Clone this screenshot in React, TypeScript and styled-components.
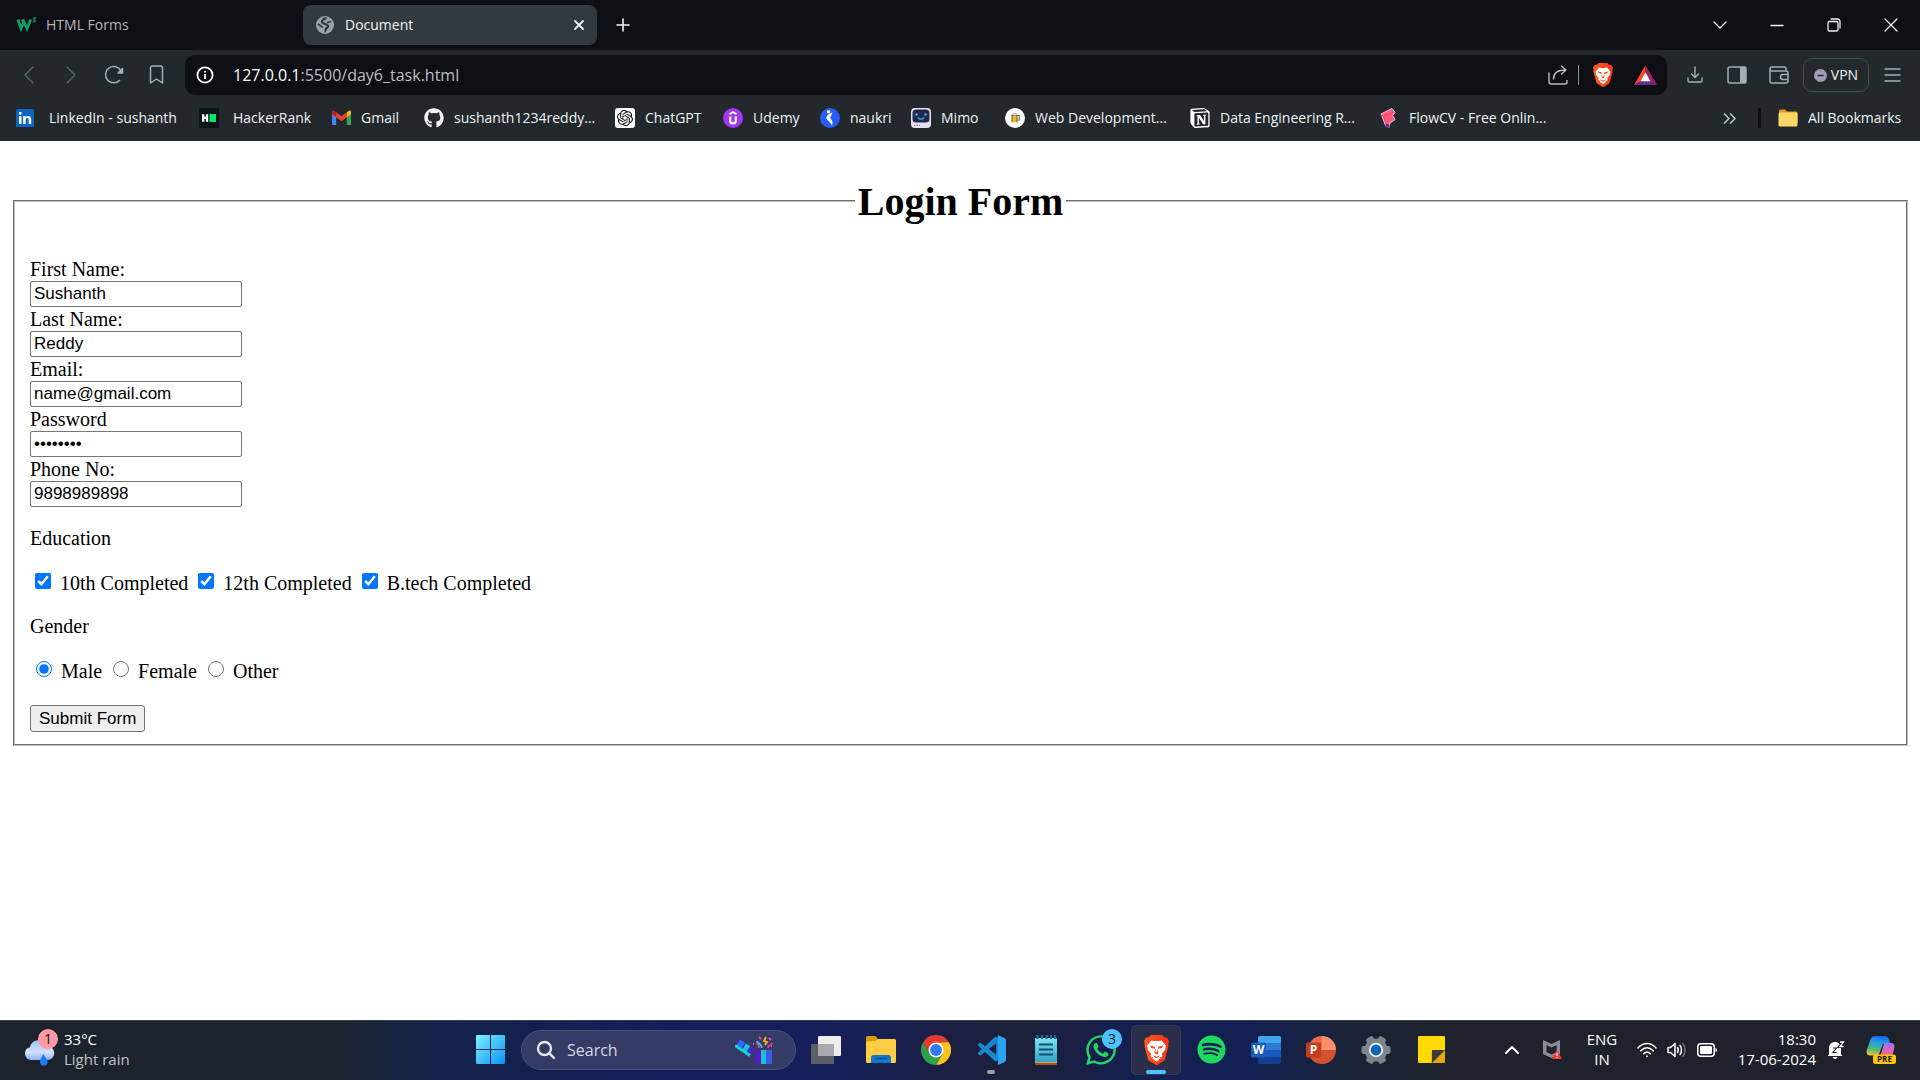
import React from "react";
import styled, { createGlobalStyle } from "styled-components";
import { SiOpenai, SiNotion } from "react-icons/si";
import { FaSpotify, FaWhatsapp, FaGithub } from "react-icons/fa";
import { VscVscode } from "react-icons/vsc";

const ui = `"Segoe UI", "Open Sans", "Noto Sans", sans-serif`;
const serif = `"Times New Roman", "Liberation Serif", serif`;
const sans = `Arial, "Liberation Sans", sans-serif`;

const Global = createGlobalStyle`
  *, *::before, *::after { box-sizing: border-box; }
  body { margin: 0; background: #fff; }
  svg { display: block; flex: none; }
`;

const Screen = styled.div`
  display: flex;
  flex-direction: column;
  min-height: 100vh;
`;

/* ---------- browser chrome ---------- */

const Chrome = styled.header`
  font: 14px/20px ${ui};
  color: #f1f2f3;
  background: #22282c;
`;

const TabStrip = styled.div`
  display: flex;
  align-items: center;
  height: 50px;
  padding-right: 1px;
  background: #0e0f14;
`;

const Tab = styled.button<{ $active?: boolean }>`
  display: flex;
  align-items: center;
  gap: ${(p) => (p.$active ? 11 : 9)}px;
  width: ${(p) => (p.$active ? 294 : 303)}px;
  height: 40px;
  padding: 0 12px 0 ${(p) => (p.$active ? 13 : 16)}px;
  border: 0;
  border-radius: 8px;
  background: ${(p) => (p.$active ? "#323a3f" : "transparent")};
  color: ${(p) => (p.$active ? "#f4f5f6" : "#b4b6ba")};
  font: 14px/20px ${ui};
  text-align: left;
`;

const TabTitle = styled.span`
  flex: 1;
`;

const PlainButton = styled.button<{ $w: number }>`
  display: flex;
  align-items: center;
  justify-content: center;
  width: ${(p) => p.$w}px;
  height: 40px;
  padding: 0;
  border: 0;
  background: transparent;
  color: inherit;
  flex: none;
`;

const Spacer = styled.div`
  flex: 1;
`;

const Toolbar = styled.div`
  display: flex;
  align-items: center;
  height: 50px;
  padding: 0 7px 0 8px;
  color: #a3adb3;
`;

const AddressBar = styled.div`
  display: flex;
  align-items: center;
  flex: 1;
  height: 40px;
  margin: 0 7px 0 8px;
  padding: 0 4px 0 10px;
  border-radius: 10px;
  background: #0e0f14;
`;

const Url = styled.a`
  flex: 1;
  margin-left: 18px;
  color: #bcbec2;
  font-size: 16px;
  line-height: 24px;
  text-decoration: none;
`;

const Host = styled.span`
  color: #fff;
`;

const Divider = styled.span<{ $dark?: boolean }>`
  width: ${(p) => (p.$dark ? 3 : 1)}px;
  height: 20px;
  background: ${(p) => (p.$dark ? "#0e0f14" : "#8a8d92")};
`;

const Vpn = styled.button`
  display: flex;
  align-items: center;
  justify-content: center;
  gap: 4px;
  width: 66px;
  height: 34px;
  margin: 0 2px 0 3px;
  padding: 0;
  border: 1px solid #444c51;
  border-radius: 9px;
  background: transparent;
  color: #f1f2f3;
  font: 14px/20px ${ui};
`;

const Bookmarks = styled.nav`
  display: flex;
  align-items: center;
  height: 41px;
  padding: 0 16px 5px 15px;
`;

const Bookmark = styled.a<{ $w?: number; $gap?: number }>`
  display: flex;
  align-items: center;
  gap: ${(p) => p.$gap ?? 10}px;
  width: ${(p) => (p.$w ? `${p.$w}px` : "auto")};
  color: inherit;
  font-size: 14px;
  text-decoration: none;
  white-space: nowrap;
`;

const IconSlot = styled.span<{ $w?: number; $bg?: string; $r?: number }>`
  display: flex;
  align-items: center;
  justify-content: center;
  flex: none;
  width: ${(p) => p.$w ?? 20}px;
  height: 20px;
  border-radius: ${(p) => p.$r ?? 0}px;
  background: ${(p) => p.$bg ?? "transparent"};
`;

/* ---------- document ---------- */

const Page = styled.main`
  flex: 1;
  padding: 10px 12px 10px 13px;
  background: #fff;
  color: #000;
  font: 20px/24px ${serif};
`;

const Fieldset = styled.fieldset`
  margin: 0;
  padding: 6px 15px 12px;
  border: 2px groove #c0c0c0;
`;

const Legend = styled.legend`
  margin: 0 auto;
  padding: 0 3px;
`;

const Title = styled.h1`
  margin: 28px 0 26px;
  font-size: 40px;
  line-height: 46px;
`;

const Field = styled.div`
  display: flex;
  flex-direction: column;
  align-items: flex-start;
`;

const TextInput = styled.input`
  width: 212px;
  height: 26px;
  padding: 1px 3px;
  border: 1px solid #767676;
  border-radius: 2px;
  background: #fff;
  color: #000;
  font: 17px/20px ${sans};
`;

const Para = styled.p`
  margin: 19px 0;
`;

const Check = styled.input`
  width: 16px;
  height: 16px;
  margin: 4px 4px 4px 5px;
  vertical-align: 1px;
`;

const Radio = styled(Check)`
  margin: 4px 4px 4px 6px;
`;

const Submit = styled.button`
  display: block;
  height: 27px;
  margin-top: 22px;
  padding: 0 8px;
  border: 1px solid #767676;
  border-radius: 3px;
  background: #efefef;
  color: #000;
  font: 17px/20px ${sans};
`;

/* ---------- taskbar ---------- */

const Taskbar = styled.footer`
  display: grid;
  grid-template-columns: 1fr auto 1fr;
  align-items: center;
  height: 60px;
  padding-bottom: 2px;
  border-top: 1px solid #39424d;
  color: #fff;
  font: 15px/20px ${ui};
  background: linear-gradient(
    90deg,
    #1d232c 0%,
    #1c232e 17%,
    #14244c 23%,
    #13204f 28%,
    #151c5c 35%,
    #15205a 43%,
    #1b1f45 49%,
    #1d2038 53%,
    #141f50 59%,
    #122152 65%,
    #1a2238 70%,
    #1d222c 75%,
    #1c212b 100%
  );
`;

const Weather = styled.button`
  display: flex;
  align-items: center;
  gap: 5px;
  justify-self: start;
  padding: 0 0 2px 24px;
  border: 0;
  background: transparent;
  color: #fff;
  font: 15px/20px ${ui};
  text-align: left;
`;

const WeatherIcon = styled.span`
  position: relative;
  width: 35px;
  height: 40px;
`;

const Badge = styled.span<{ $bg: string; $top: number; $right: number }>`
  position: absolute;
  top: ${(p) => p.$top}px;
  right: ${(p) => p.$right}px;
  width: 20px;
  height: 20px;
  border-radius: 50%;
  background: ${(p) => p.$bg};
  color: #101820;
  font: 14px/20px ${ui};
  text-align: center;
`;

const Muted = styled.span`
  display: block;
  color: #bfc3c8;
`;

const Apps = styled.div`
  display: flex;
  align-items: center;
  gap: 5px;
`;

const AppButton = styled.button<{ $active?: boolean; $w?: number }>`
  position: relative;
  display: flex;
  align-items: center;
  justify-content: center;
  width: ${(p) => p.$w ?? 50}px;
  height: 50px;
  padding: 0;
  border: 1px solid ${(p) => (p.$active ? "#363a55" : "transparent")};
  border-radius: 5px;
  background: ${(p) => (p.$active ? "#2a2e4a" : "transparent")};
`;

const Running = styled.span<{ $active?: boolean }>`
  position: absolute;
  bottom: 0;
  left: 50%;
  width: ${(p) => (p.$active ? 20 : 8)}px;
  height: 4px;
  margin-left: ${(p) => (p.$active ? -10 : -4)}px;
  border-radius: 2px;
  background: ${(p) => (p.$active ? "#4cc2ff" : "#9a9fae")};
`;

const SearchBox = styled.label`
  display: flex;
  align-items: center;
  gap: 11px;
  width: 275px;
  height: 40px;
  padding: 0 22px 0 14px;
  border: 1px solid #4a5178;
  border-radius: 20px;
  background: #343c66;
`;

const SearchInput = styled.input`
  flex: 1;
  min-width: 0;
  padding: 0;
  border: 0;
  background: transparent;
  color: #d5d8e2;
  font: 16px/24px ${ui};
  &::placeholder { color: #d5d8e2; opacity: 1; }
`;

const Tray = styled.div`
  display: flex;
  align-items: center;
  justify-self: end;
  padding-right: 14px;
`;

const Stack = styled.div<{ $w: number; $align: string }>`
  width: ${(p) => p.$w}px;
  padding-bottom: 2px;
  text-align: ${(p) => p.$align};
`;

/* ---------- drawings ---------- */

type LineProps = { w: number; h?: number; d: string; sw?: number; color?: string };
const Line = ({ w, h = w, d, sw = 1.4, color = "currentColor" }: LineProps) => (
  <svg width={w} height={h} viewBox={`0 0 ${w} ${h}`} fill="none" stroke={color} strokeWidth={sw} strokeLinecap="round" strokeLinejoin="round">
    <path d={d} />
  </svg>
);

const BraveLion = ({ size }: { size: number }) => (
  <svg width={(size * 25) / 30} height={size} viewBox="0 0 25 30">
    <defs>
      <linearGradient id="lion" x1="0" y1="0" x2="1" y2="0"><stop offset="0" stopColor="#ff5a1c" /><stop offset="1" stopColor="#fb3410" /></linearGradient>
    </defs>
    <path d="M7 0h11l2.500 2.600L23 2.400 25 6l-.8 3 .3 2-3.300 12.500c-.4 1.500-1 2-2 2.800L13.700 29.600c-.8.5-1.600.5-2.400 0L5.800 26.300c-1-.8-1.600-1.300-2-2.800L.5 11l.3-2L0 6l2-3.600 2.500.2z" fill="url(#lion)" />
    <path d="M7.500 5.500l3 .6h4l3-.6 4.500 5.300-.8 2.200.3 1.500-3.700 4.300.7 2.200-1 1.500-2.300-.8 1.300 1.800-4 3-4-3 1.300-1.800-2.300.8-1-1.500.7-2.200L3.500 14.500l.3-1.500-.8-2.200z" fill="#fff" />
    <path d="M6 10.500l4.800 1.200.2 2-3.800-.8zM19 10.500l-4.800 1.200-.2 2 3.800-.8zM11.300 13.500l-.8 3.500 1 2.200h2l1-2.200-.8-3.500-.5 3.700h-1.400zM8.500 20.200l2.700 1 1.300.8 1.300-.8 2.700-1-2.700 2.300-1.300.6-1.300-.6z" fill="#fb4514" />
  </svg>
);

const W3Icon = () => (
  <svg width="21" height="16" viewBox="0 0 21 16" fill="none" stroke="#0fa06a">
    <path d="M1.800 2.500l3.200 9 3-6.500 3 6.500 3.800-9M6.200 2.500l1.600 3.500" strokeWidth="2.800" />
    <path d="M16.600 1h2.800l-1.600 1.900c2.600.1 1.800 3-1.200 1.800" strokeWidth="1.100" />
  </svg>
);

const Globe = () => (
  <svg width="18" height="18" viewBox="0 0 18 18">
    <circle cx="9" cy="9" r="9" fill="#9ca1aa" />
    <path d="M10.500 2.500C8 2 5.500 4.500 6 6.300c.5 1.800 5.500 1.400 6 3.500.3 1.700-1.800 2.200-2.300 3.700-.3 1-.5 1.800-1.200 2" fill="none" stroke="#323a3f" strokeWidth="2.400" />
    <path d="M2 8l5 3.500M11 6.500l4-1" fill="none" stroke="#323a3f" strokeWidth="1.600" />
  </svg>
);

const Gmail = () => (
  <svg width="19" height="16" viewBox="0 0 19 16">
    <path d="M0 3v11a1 1 0 001 1h3.200V7L0 3z" fill="#4285f4" />
    <path d="M19 3v11a1 1 0 01-1 1h-3.200V7L19 3z" fill="#34a853" />
    <path d="M14.800 2.200L17 .8c1-.6 2 .2 2 1.400V4l-4.200 3.200z" fill="#fbbc04" />
    <path d="M4.200 2.200L2 .8C1 .2 0 1 0 2.200V4l4.200 3.200z" fill="#c5221f" />
    <path d="M4.200 2.200l5.300 4 5.300-4v5l-5.300 4-5.300-4z" fill="#ea4335" />
  </svg>
);

const LinkedIn = () => (
  <svg width="18" height="18" viewBox="0 0 18 18">
    <rect width="18" height="18" rx="1.500" fill="#0a66c2" />
    <path d="M3 7h2.500v8H3zM3 3h2.500v2.500H3zM7.200 7h2.400v1.200C10.800 6.200 15.200 6.200 15.200 10.200V15h-2.500v-4.200c0-2.400-3-2.200-3 0V15H7.200z" fill="#fff" />
  </svg>
);

const HackerRank = () => (
  <svg width="20" height="20" viewBox="0 0 20 20">
    <rect width="20" height="20" fill="#0e141e" />
    <path d="M3 6.200h2.300v2.600h1.600V6.200h2.300v7.600H6.900v-2.700H5.300v2.700H3z" fill="#fff" />
    <rect x="10.500" y="6" width="6.500" height="8" fill="#00ea64" />
  </svg>
);

const Udemy = () => (
  <svg width="20" height="20" viewBox="0 0 20 20">
    <circle cx="10" cy="10" r="10" fill="#a435f0" />
    <path d="M6.500 6.200L10 4l3.500 2.200" fill="none" stroke="#fff" strokeWidth="1.800" />
    <path d="M7.200 8.500v4.500c0 3.200 5.600 3.200 5.600 0V8.500" fill="none" stroke="#fff" strokeWidth="2.200" />
  </svg>
);

const Naukri = () => (
  <svg width="20" height="20" viewBox="0 0 20 20">
    <circle cx="10" cy="10" r="10" fill="#275df5" />
    <circle cx="8.500" cy="3.800" r="1.800" fill="#fff" />
    <path d="M12.500 4.500C8 6 6 8.500 6.500 10.500c.4 1.700 4 3.500 5.500 7 .9-2.500.8-5-1.800-7.500.1-1.500 1.600-3 2.300-5.500z" fill="#fff" />
  </svg>
);

const Mimo = () => (
  <svg width="20" height="20" viewBox="0 0 20 20">
    <rect width="20" height="20" rx="4" fill="#e4e2f2" />
    <rect x="1.500" y="1.500" width="17" height="13" rx="3.500" fill="#23264f" />
    <path d="M7 9.500c1 2.200 5 2.200 6 0" fill="none" stroke="#2fc4f0" strokeWidth="1.300" />
    <circle cx="5.500" cy="6.500" r="1.200" fill="#2fc4f0" />
    <circle cx="14.500" cy="6.500" r="1.200" fill="#2fc4f0" />
    <path d="M3 17.300h1.500M5.500 17.300H7M8 17.300h1" stroke="#8e8aa8" strokeWidth="1.200" />
  </svg>
);

const Beer = () => (
  <svg width="20" height="20" viewBox="0 0 20 20">
    <circle cx="10" cy="10" r="10" fill="#fff" />
    <path d="M12 7.500h2.300v4.500H12" fill="none" stroke="#777" strokeWidth="1.200" />
    <rect x="7" y="7" width="5" height="7" fill="#f5b81c" />
    <path d="M6.500 7.500c0-2.500 6-2.500 6 0z" fill="#ddd" stroke="#777" strokeWidth=".6" />
    <path d="M7 7v7.300M12 7v7.300" stroke="#5b4a2a" strokeWidth=".9" />
  </svg>
);

const Flow = () => (
  <svg width="20" height="20" viewBox="0 0 20 20">
    <path d="M2 6L13 .5l3 4-2.500 3 2.500 4-5 3.500-1 4.500-3-1z" fill="#ff5a78" stroke="#f3c4d8" strokeWidth="1" />
    <path d="M2 7l3 1.500 9-4M5 8.500L8 19" stroke="#ee3d86" fill="none" />
    <circle cx="8.500" cy="18" r="2" fill="#5a2c80" />
  </svg>
);

const YellowFolder = () => (
  <svg width="20" height="18" viewBox="0 0 20 18">
    <path d="M1 2a1.500 1.500 0 011.500-1.500H7L9 2.500h9a1.500 1.500 0 011.500 1.500v10H1z" fill="#d89c16" />
    <rect x=".5" y="3.500" width="19" height="14" rx="1.500" fill="#ffd766" />
  </svg>
);

const Bat = () => (
  <svg width="23" height="20" viewBox="0 0 23 20">
    <path d="M11.500 0L0 20l7-4 4.500-8z" fill="#ff4724" />
    <path d="M11.500 0L23 20l-7-4-4.500-8z" fill="#9e1f63" />
    <path d="M0 20h23l-7-4H7z" fill="#662d91" />
    <path d="M11.500 7.500L16.500 16.200h-10z" fill="#fff" />
  </svg>
);

const Rain = () => (
  <svg width="32" height="40" viewBox="0 0 32 40">
    <defs>
      <linearGradient id="cloud" x1="0" y1="0" x2="0" y2="1"><stop offset="0" stopColor="#9fc0f7" /><stop offset=".6" stopColor="#d3e1fb" /><stop offset="1" stopColor="#8fb2f1" /></linearGradient>
    </defs>
    <path d="M7 31a6.500 6.500 0 01-1-12.800C7.500 10 19 8.500 22 17c10-1 11 13 2 14z" fill="url(#cloud)" />
    <path d="M19 25c3 3.500 5 6 4.500 8.500-.7 4.500-7.300 4-7.500-.3C15.900 31 17.500 28.500 19 25z" fill="#1f7df2" />
  </svg>
);

const Windows = () => (
  <svg width="29" height="29" viewBox="0 0 29 29">
    <defs><linearGradient id="win" x1="0" y1="0" x2="1" y2="1"><stop offset="0" stopColor="#7ef0ff" /><stop offset="1" stopColor="#0a94f5" /></linearGradient></defs>
    <path d="M1 0h13v14H0V1a1 1 0 011-1zM15 0h13a1 1 0 011 1v13H15zM0 15h14v14H1a1 1 0 01-1-1zM15 15h14v13a1 1 0 01-1 1H15z" fill="url(#win)" />
  </svg>
);

const Gift = () => (
  <svg width="38" height="28" viewBox="0 0 38 28">
    <rect x="20" y="14" width="17" height="14" fill="#3b5ae8" />
    <rect x="20" y="14" width="6" height="14" fill="#5a18c2" />
    <rect x="26" y="14" width="5" height="14" fill="#16c5d8" />
    <path d="M4 3l15 10-4 6.500L0 9.500z" fill="#4526d0" />
    <path d="M5 3.500l5 3.300-4 6.600-5-3.300z" fill="#2f6df0" />
    <path d="M11 7.500l4 2.700-4 6.600-4-2.700z" fill="#16c5d8" />
    <path d="M0 9.500l15 10" stroke="#19d3cf" strokeWidth="3" fill="none" />
    <path d="M24 12c0-3-2-4-2-6M33 12c0-3 4-3 4-5" stroke="#e8308c" strokeWidth="2" fill="none" />
    <path d="M27 12c0-4-4-4-5-7" stroke="#30d5e8" strokeWidth="1.600" fill="none" />
    <path d="M31 1l-2 4 3 1-2 3" stroke="#f5a81c" strokeWidth="2" fill="none" />
    <path d="M24 1l2 2M34 2l2 2M18 8h1M36 10h1" stroke="#ec4fb0" strokeWidth="1.800" />
  </svg>
);

const TaskView = () => (
  <svg width="30" height="28" viewBox="0 0 30 28">
    <rect y="8" width="23" height="20" rx="1" fill="#5d5f66" />
    <rect x="7" width="23" height="20" rx="1" fill="#ededee" />
    <path d="M7 8h16v12H7z" fill="#a9abaf" />
  </svg>
);

const Explorer = () => (
  <svg width="30" height="27" viewBox="0 0 30 27">
    <path d="M0 1.500A1.500 1.500 0 011.500 0h8L12 3l-1 5H0z" fill="#dd9a07" />
    <path d="M0 5.500l9-.5 3-2h16.500A1.500 1.500 0 0130 4.500v21a1.500 1.500 0 01-1.500 1.500h-27A1.500 1.500 0 010 25.500z" fill="#ffcd43" />
    <path d="M5 27v-5.500a2.500 2.500 0 012.500-2.500h15a2.500 2.500 0 012.500 2.500V27z" fill="#0f78c8" />
    <path d="M9 22.500h12" stroke="#064a88" strokeWidth="1.400" />
  </svg>
);

const ChromeLogo = () => (
  <svg width="30" height="30" viewBox="0 0 30 30">
    <path d="M2 7.500A15 15 0 0128 7.500H15L8.500 18.800z" fill="#e33b2e" />
    <path d="M28 7.500A15 15 0 0115 30l6.500-11.200V7.500z" fill="#fcc31e" />
    <path d="M2 7.500A15 15 0 0015 30l6.500-11.200h-13z" fill="#2da04c" />
    <path d="M15 7.500h13l-6.500 11.300z" fill="#fcc31e" />
    <circle cx="15" cy="15" r="7.500" fill="#fff" />
    <circle cx="15" cy="15" r="5.900" fill="#2f7bee" />
  </svg>
);

const Code = () => (
  <svg width="30" height="30" viewBox="0 0 24 24">
    <VscVscode x={0} y={0} size={24} color="#1a86d0" />
    <path d="M17.500 0L23 2.500q1 .5 1 1.500v16q0 1-1 1.500L17.500 24z" fill="#2aa3f2" />
  </svg>
);

const Notepad = () => (
  <svg width="24" height="30" viewBox="0 0 24 30">
    <defs><linearGradient id="np" x1="0" y1="0" x2="0" y2="1"><stop offset="0" stopColor="#7fe2f0" /><stop offset="1" stopColor="#33a3c6" /></linearGradient></defs>
    <rect x="1" y="25" width="22" height="5" rx="1" fill="#a35412" />
    <rect x="1" y="25" width="22" height="2.500" fill="#f4f4f4" />
    <rect x="1" y="3" width="22" height="24" rx="1" fill="url(#np)" />
    <path d="M3.500 0v4M8 0v4M12.500 0v4M17 0v4M21 0v4" stroke="#1b6e8f" strokeWidth="2.200" />
    <path d="M5 9.500h14M5 14.500h14M5 19.500h14" stroke="#0d5272" strokeWidth="2" />
  </svg>
);

const OfficeMark = styled.text`
  font: bold 12px ${ui};
`;

const Word = () => (
  <svg width="30" height="28" viewBox="0 0 30 28">
    <path d="M7 1.500A1.500 1.500 0 018.500 0h20A1.500 1.500 0 0130 1.500V7H7z" fill="#41a5ee" />
    <path d="M7 7h23v7H7z" fill="#2b7cd3" />
    <path d="M7 14h23v7H7z" fill="#185abd" />
    <path d="M7 21h23v5.500a1.500 1.500 0 01-1.500 1.500h-20A1.500 1.500 0 017 26.500z" fill="#103f91" />
    <rect y="6.500" width="15" height="15" rx="1.500" fill="#185abd" />
    <OfficeMark x="7.500" y="18.300" textAnchor="middle" fill="#fff">W</OfficeMark>
  </svg>
);

const PowerPoint = () => (
  <svg width="30" height="28" viewBox="0 0 30 28">
    <path d="M16 0a14 14 0 00-14 14h14z" fill="#ed6c47" />
    <path d="M16 0a14 14 0 0114 14H16z" fill="#ff8f6b" />
    <path d="M2 14a14 14 0 0028 0z" fill="#d35230" />
    <rect y="6.500" width="15" height="15" rx="1.500" fill="#c43e1c" />
    <OfficeMark x="7.500" y="18.300" textAnchor="middle" fill="#fff">P</OfficeMark>
  </svg>
);

const Gear = () => (
  <svg width="30" height="30" viewBox="0 0 30 30">
    <g fill="#7e858d">
      {[0, 60, 120].map((a) => (
        <rect key={a} x="0.500" y="11" width="29" height="8" rx="2" transform={`rotate(${a} 15 15)`} />
      ))}
      <circle cx="15" cy="15" r="11.500" />
    </g>
    <circle cx="15" cy="15" r="6.300" fill="#0f66b8" stroke="#eef1f4" strokeWidth="1.800" />
  </svg>
);

const Sticky = () => (
  <svg width="27" height="27" viewBox="0 0 27 27">
    <path d="M1 0h25a1 1 0 011 1v13L13 27H1a1 1 0 01-1-1V1a1 1 0 011-1z" fill="#ffd900" />
    <path d="M14 14h13v12a1 1 0 01-1 1H13z" fill="#e5a60a" />
    <path d="M14 14h13L14 27z" fill="#3b3b3b" />
  </svg>
);

const McAfee = () => (
  <svg width="19" height="20" viewBox="0 0 19 20">
    <path d="M0 0l8.500 4L17 0v14l-8.500 4L0 14zM3.500 5v7l5 2.500 5-2.500V5l-5 2.600z" fill="#8b8d92" fillRule="evenodd" />
    <path d="M14 10l5 9H9z" fill="#ef3b3b" />
    <path d="M14 13v3M14 17v1" stroke="#fff" />
  </svg>
);

const Wifi = () => <Line w={20} h={16} sw={1.6} color="#fff" d="M1 6c5-6 13-6 18 0M3.800 8.800c4-4 8.400-4 12.400 0M6.800 11.600c2.200-2 4.200-2 6.400 0M10 14v.4" />;
const Speaker = () => (
  <svg width="20" height="18" viewBox="0 0 20 18" fill="none" stroke="#fff" strokeWidth="1.500" strokeLinejoin="round" strokeLinecap="round">
    <path d="M1 6.500h2.500L8 2.500v13l-4.500-4H1zM10.500 6.500c1 1.500 1 3.500 0 5M13 4.500c2 2.500 2 6.500 0 9" />
    <path d="M15.800 2.500c3 3.500 3 9.500 0 13" stroke="#6d7178" />
  </svg>
);
const Battery = () => (
  <svg width="21" height="14" viewBox="0 0 21 14">
    <rect x=".8" y=".8" width="16.400" height="12.400" rx="3" fill="none" stroke="#fff" strokeWidth="1.500" />
    <rect x="3" y="3" width="12" height="8" rx="1.200" fill="#fff" />
    <path d="M18.500 5c2 0 2 4 0 4z" fill="#fff" />
  </svg>
);
const Bell = () => (
  <svg width="18" height="20" viewBox="0 0 18 20">
    <path d="M2 14.500V8c0-8 12-8 12 0v6.500l1.500 1.500H.5zM5.500 17h5c-.8 2.500-4.200 2.500-5 0z" fill="#fff" />
    <path d="M6 8h3.500L6 12.500h3.500" fill="none" stroke="#1c212b" strokeWidth="1.200" />
    <path d="M13 2h3.500L13 6.500h3.500" fill="none" stroke="#1c212b" strokeWidth="3.200" />
    <path d="M13 2h3.500L13 6.500h3.500" fill="none" stroke="#fff" strokeWidth="1.300" />
  </svg>
);
const PreMark = styled.text`
  font: bold 8px ${ui};
`;
const Copilot = () => (
  <svg width="30" height="29" viewBox="0 0 30 29">
    <defs>
      <linearGradient id="cpA" x1="0.600" y1="0" x2="0.400" y2="1"><stop offset="0" stopColor="#1c62d8" /><stop offset=".3" stopColor="#1d9bf0" /><stop offset=".7" stopColor="#4fb878" /><stop offset="1" stopColor="#e0c23a" /></linearGradient>
      <linearGradient id="cpB" x1="0" y1="0" x2="0" y2="1"><stop offset="0" stopColor="#a96bf8" /><stop offset="1" stopColor="#f5628e" /></linearGradient>
    </defs>
    <path d="M9 1h10c3.500 0 4 3 5 7l-7 1-4 10c-.4 1-1 1.500-2 1.500H5c-4.500 0-5-2.500-4-6L4.500 4.500C5.300 2 6.500 1 9 1z" fill="url(#cpA)" />
    <path d="M19 8h6c3.500 0 4 2.500 3.200 6L26.500 20h-12l3-9.500C18 9 18.200 8 19 8z" fill="url(#cpB)" />
    <rect x="7" y="19.500" width="23" height="9.500" rx="2.500" fill="#ffc20e" />
    <PreMark x="18.500" y="27.200" textAnchor="middle" fill="#1c1c1c">PRE</PreMark>
  </svg>
);

/* ---------- data ---------- */

const bookmarks: { text: string; w: number; gap?: number; icon: React.ReactNode }[] = [
  { text: "LinkedIn - sushanth", w: 184, gap: 14, icon: <IconSlot><LinkedIn /></IconSlot> },
  { text: "HackerRank", w: 132, gap: 14, icon: <IconSlot><HackerRank /></IconSlot> },
  { text: "Gmail", w: 93, icon: <IconSlot><Gmail /></IconSlot> },
  { text: "sushanth1234reddy...", w: 191, icon: <IconSlot><FaGithub size={20} /></IconSlot> },
  { text: "ChatGPT", w: 108, icon: <IconSlot $bg="#fff" $r={3}><SiOpenai size={16} color="#111" /></IconSlot> },
  { text: "Udemy", w: 97, icon: <IconSlot><Udemy /></IconSlot> },
  { text: "naukri", w: 91, icon: <IconSlot><Naukri /></IconSlot> },
  { text: "Mimo", w: 94, icon: <IconSlot><Mimo /></IconSlot> },
  { text: "Web Development...", w: 185, icon: <IconSlot><Beer /></IconSlot> },
  { text: "Data Engineering R...", w: 189, icon: <IconSlot><SiNotion size={20} color="#fff" /></IconSlot> },
  { text: "FlowCV - Free Onlin...", w: 180, icon: <IconSlot><Flow /></IconSlot> },
];

const fields = [
  { id: "first", label: "First Name:", type: "text", value: "Sushanth" },
  { id: "last", label: "Last Name:", type: "text", value: "Reddy" },
  { id: "email", label: "Email:", type: "email", value: "name@gmail.com" },
  { id: "password", label: "Password", type: "password", value: "password" },
  { id: "phone", label: "Phone No:", type: "text", value: "9898989898" },
];

const degrees = ["10th Completed", "12th Completed", "B.tech Completed"];
const genders = ["Male", "Female", "Other"];

export default function App() {
  return (
    <Screen>
      <Global />
      <Chrome>
        <TabStrip>
          <Tab>
            <W3Icon />
            <TabTitle>HTML Forms</TabTitle>
          </Tab>
          <Tab $active>
            <Globe />
            <TabTitle>Document</TabTitle>
            <Line w={12} sw={1.8} d="M2 2l8 8M10 2l-8 8" />
          </Tab>
          <PlainButton $w={52} aria-label="New tab"><Line w={14} sw={1.6} d="M7 1v12M1 7h12" /></PlainButton>
          <Spacer />
          <PlainButton $w={57} aria-label="Search tabs"><Line w={14} h={10} sw={1.2} d="M1 2l6 6 6-6" /></PlainButton>
          <PlainButton $w={57} aria-label="Minimize"><Line w={14} h={3} sw={1.4} d="M1 1.500h12" /></PlainButton>
          <PlainButton $w={57} aria-label="Restore"><Line w={14} sw={1.3} d="M1 5a1.500 1.500 0 011.500-1.500h7A1.500 1.500 0 0111 5v6.500a1.500 1.500 0 01-1.500 1.500h-7A1.500 1.500 0 011 11.500zM4 1h6.500A2.500 2.500 0 0113 3.500V10" /></PlainButton>
          <PlainButton $w={57} aria-label="Close"><Line w={14} sw={1.2} d="M1 1l12 12M13 1L1 13" /></PlainButton>
        </TabStrip>

        <Toolbar>
          <PlainButton $w={42} aria-label="Back"><Line w={10} h={18} color="#5e666b" d="M9 1L1 9l8 8" /></PlainButton>
          <PlainButton $w={42} aria-label="Forward"><Line w={10} h={18} color="#5e666b" d="M1 1l8 8-8 8" /></PlainButton>
          <PlainButton $w={43} aria-label="Reload">
            <svg width="20" height="20" viewBox="0 0 20 20" fill="none" stroke="#a3adb3" strokeWidth="1.500">
              <path d="M16 15A8.200 8.200 0 1117 5.800" />
              <path d="M14 8h4.500V3.500z" fill="#a3adb3" strokeLinejoin="round" />
            </svg>
          </PlainButton>
          <PlainButton $w={42} aria-label="Bookmark this page"><Line w={15} h={20} sw={1.5} d="M1.500 3a2 2 0 012-2h8a2 2 0 012 2v15l-6-4-6 4z" /></PlainButton>
          <AddressBar>
            <svg width="20" height="20" viewBox="0 0 20 20" fill="none" stroke="#fff" strokeWidth="1.800">
              <circle cx="10" cy="10" r="7.600" />
              <path d="M10 9v5M10 6v1.600" />
            </svg>
            <Url href="#"><Host>127.0.0.1</Host>:5500/day6_task.html</Url>
            <PlainButton $w={40} aria-label="Share"><Line w={20} h={20} color="#b7bcc0" d="M1 8v9a2 2 0 002 2h14a2 2 0 002-2v-1.500M5.500 14c0-6 3.500-9 12-9M13.500 1l4.500 4-4.500 4" /></PlainButton>
            <Divider />
            <PlainButton $w={48} aria-label="Shields"><BraveLion size={24} /></PlainButton>
            <PlainButton $w={36} aria-label="Rewards"><Bat /></PlainButton>
          </AddressBar>
          <PlainButton $w={42} aria-label="Downloads"><Line w={16} h={18} d="M8 1v10M4.500 8L8 11.500 11.500 8M1 12v2.500A1.500 1.500 0 002.500 16h11a1.500 1.500 0 001.500-1.500V12" /></PlainButton>
          <PlainButton $w={42} aria-label="Sidebar">
            <svg width="20" height="18" viewBox="0 0 20 18"><rect x="1" y="1" width="18" height="16" rx="1.500" fill="none" stroke="#a3adb3" strokeWidth="1.500" /><path d="M13 1h6v16h-6z" fill="#a3adb3" /></svg>
          </PlainButton>
          <PlainButton $w={42} aria-label="Wallet"><Line w={20} h={18} sw={1.5} d="M17 5V3a2 2 0 00-2-2H3a2 2 0 000 4h14a2 2 0 012 2v8a2 2 0 01-2 2H3a2 2 0 01-2-2V3M19 8.500h-5a2.500 2.500 0 000 5h5" /></PlainButton>
          <Vpn>
            <svg width="13" height="13" viewBox="0 0 13 13"><circle cx="6.500" cy="6.500" r="6.500" fill="#9a9db5" /><path d="M3.500 6.500h6" stroke="#22282c" strokeWidth="1.500" /></svg>
            VPN
          </Vpn>
          <PlainButton $w={42} aria-label="Menu"><Line w={17} h={14} d="M1 1h15M1 7h15M1 13h15" /></PlainButton>
        </Toolbar>

        <Bookmarks>
          {bookmarks.map((b) => (
            <Bookmark key={b.text} href="#" $w={b.w} $gap={b.gap}>
              {b.icon}
              {b.text}
            </Bookmark>
          ))}
          <Spacer />
          <PlainButton $w={22} aria-label="More bookmarks"><Line w={13} h={11} sw={1.7} color="#b5bfc5" d="M1.500 1L6 5.500 1.500 10M7.500 1L12 5.500 7.500 10" /></PlainButton>
          <IconSlot $w={38}><Divider $dark /></IconSlot>
          <Bookmark href="#" $w={126}>
            <IconSlot><YellowFolder /></IconSlot>
            All Bookmarks
          </Bookmark>
        </Bookmarks>
      </Chrome>

      <Page>
        <form onSubmit={(e) => e.preventDefault()}>
          <Fieldset>
            <Legend><Title>Login Form</Title></Legend>
            {fields.map((f) => (
              <Field key={f.id}>
                <label htmlFor={f.id}>{f.label}</label>
                <TextInput id={f.id} type={f.type} defaultValue={f.value} />
              </Field>
            ))}
            <Para>Education</Para>
            {degrees.map((d, i) => (
              <React.Fragment key={d}>
                <Check type="checkbox" id={`degree${i}`} defaultChecked /> <label htmlFor={`degree${i}`}>{d}</label>{" "}
              </React.Fragment>
            ))}
            <Para>Gender</Para>
            {genders.map((g, i) => (
              <React.Fragment key={g}>
                <Radio type="radio" name="gender" id={`gender${i}`} defaultChecked={i === 0} /> <label htmlFor={`gender${i}`}>{g}</label>{" "}
              </React.Fragment>
            ))}
            <Submit type="submit">Submit Form</Submit>
          </Fieldset>
        </form>
      </Page>

      <Taskbar>
        <Weather>
          <WeatherIcon><Rain /><Badge $bg="#ff99a4" $top={0} $right={1}>1</Badge></WeatherIcon>
          <span>33°C<Muted>Light rain</Muted></span>
        </Weather>
        <Apps>
          <AppButton aria-label="Start" $w={52}><Windows /></AppButton>
          <SearchBox>
            <Line w={20} sw={2.4} color="#e4e7ef" d="M15 8.500a6.500 6.500 0 11-13 0 6.500 6.500 0 0113 0zM13.200 13.200L18 18" />
            <SearchInput type="search" placeholder="Search" />
            <Gift />
          </SearchBox>
          <AppButton aria-label="Task view"><TaskView /></AppButton>
          <AppButton aria-label="File Explorer"><Explorer /></AppButton>
          <AppButton aria-label="Chrome"><ChromeLogo /></AppButton>
          <AppButton aria-label="Visual Studio Code"><Code /><Running /></AppButton>
          <AppButton aria-label="Notepad"><Notepad /></AppButton>
          <AppButton aria-label="WhatsApp"><FaWhatsapp size={34} color="#25d366" /><Badge $bg="#4cc2ff" $top={3} $right={3}>3</Badge></AppButton>
          <AppButton aria-label="Brave" $active><BraveLion size={30} /><Running $active /></AppButton>
          <AppButton aria-label="Spotify"><FaSpotify size={29} color="#1ed760" /></AppButton>
          <AppButton aria-label="Word"><Word /></AppButton>
          <AppButton aria-label="PowerPoint"><PowerPoint /></AppButton>
          <AppButton aria-label="Settings"><Gear /></AppButton>
          <AppButton aria-label="Sticky Notes"><Sticky /></AppButton>
        </Apps>
        <Tray>
          <PlainButton $w={40} aria-label="Hidden icons"><Line w={14} h={8} sw={2} d="M1 7l6-6 6 6" /></PlainButton>
          <PlainButton $w={40} aria-label="McAfee"><McAfee /></PlainButton>
          <Stack $w={60} $align="center">ENG<br />IN</Stack>
          <PlainButton $w={30} aria-label="Network"><Wifi /></PlainButton>
          <PlainButton $w={30} aria-label="Volume"><Speaker /></PlainButton>
          <PlainButton $w={30} aria-label="Battery"><Battery /></PlainButton>
          <Stack $w={94} $align="right">18:30<br />17-06-2024</Stack>
          <PlainButton $w={40} aria-label="Notifications"><Bell /></PlainButton>
          <PlainButton $w={50} aria-label="Copilot"><Copilot /></PlainButton>
        </Tray>
      </Taskbar>
    </Screen>
  );
}
